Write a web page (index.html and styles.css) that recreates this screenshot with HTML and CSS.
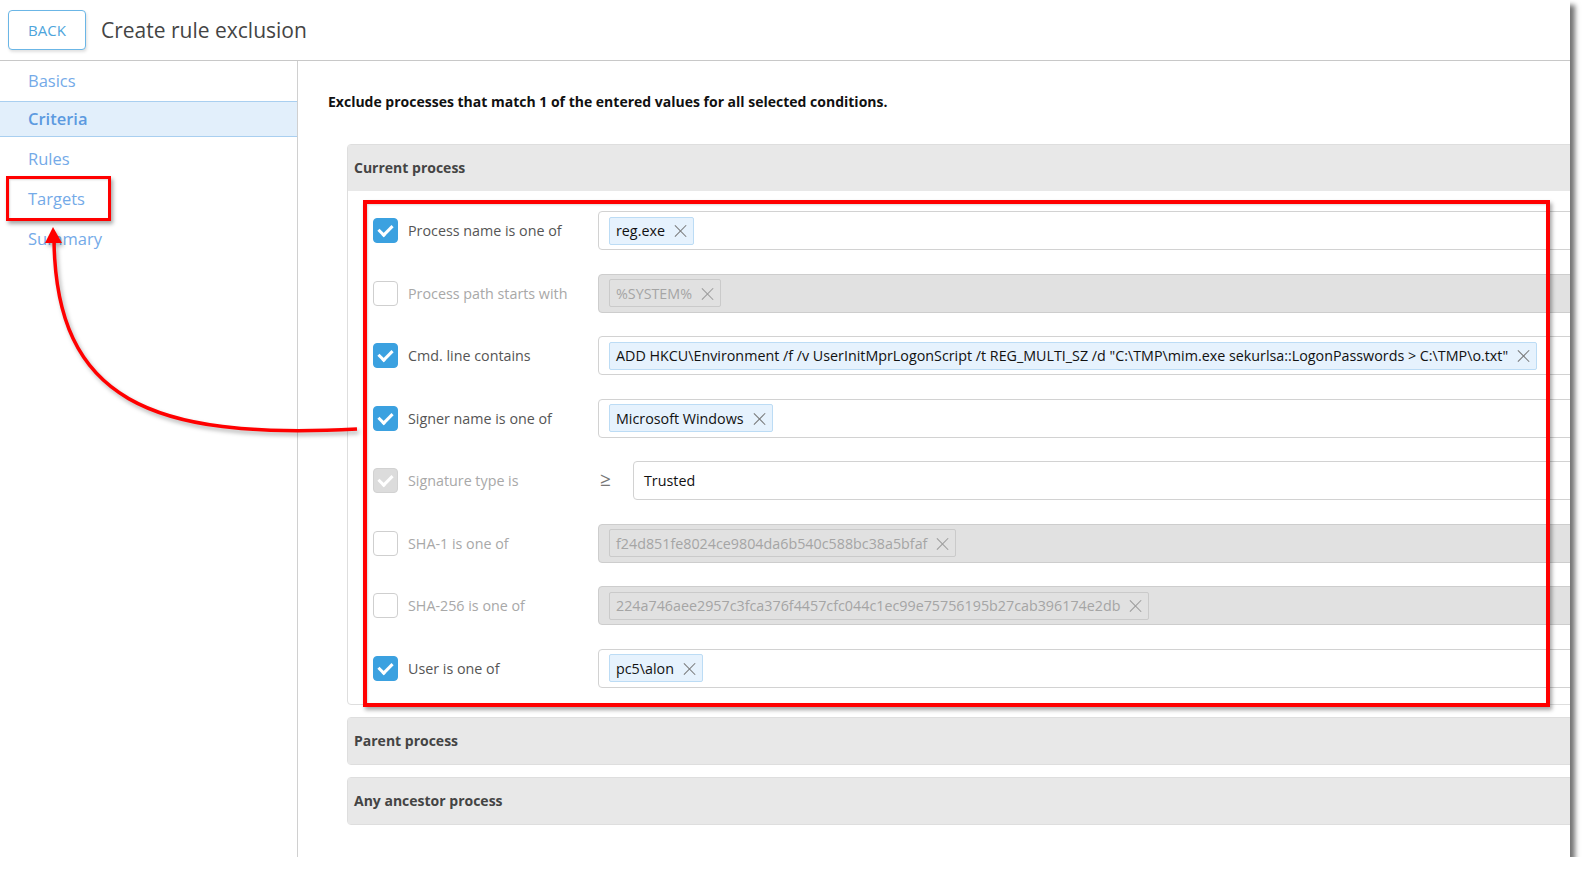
FILE: index.html
```html
<!DOCTYPE html>
<html lang="en">

<head>
    <meta charset="UTF-8">
    <meta name="viewport" content="width=device-width, initial-scale=1.0">
    <title>Create rule exclusion</title>
    <link rel="stylesheet" href="styles.css">
</head>

<body>
    <div class="frame">
        <div class="topbar">
            <button class="back">BACK</button>
            <h1 class="title">Create rule exclusion</h1>
        </div>
        <div class="layout">
            <div class="nav">
                <div class="navItem">Basics</div>
                <div class="navItem active">Criteria</div>
                <div class="navItem">Rules</div>
                <div class="navItem">Targets</div>
                <div class="navItem">Summary</div>
            </div>
            <div class="main">
                <p class="intro">Exclude processes that match 1 of the entered values for all selected conditions.</p>

                <div class="panel">
                    <div class="panelHead">Current process</div>
                    <div class="panelBody">
                        <div class="row">
                            <span class="check on"></span>
                            <span class="label">Process name is one of</span>
                            <div class="field">
                                <span class="tag">reg.exe<i class="x"></i></span>
                            </div>
                        </div>
                        <div class="row off">
                            <span class="check"></span>
                            <span class="label">Process path starts with</span>
                            <div class="field">
                                <span class="tag">%SYSTEM%<i class="x"></i></span>
                            </div>
                        </div>
                        <div class="row">
                            <span class="check on"></span>
                            <span class="label">Cmd. line contains</span>
                            <div class="field">
                                <span class="tag">ADD HKCU\Environment /f /v UserInitMprLogonScript /t REG_MULTI_SZ /d "C:\TMP\mim.exe sekurlsa::LogonPasswords &gt; C:\TMP\o.txt"<i class="x"></i></span>
                            </div>
                        </div>
                        <div class="row">
                            <span class="check on"></span>
                            <span class="label">Signer name is one of</span>
                            <div class="field">
                                <span class="tag">Microsoft Windows<i class="x"></i></span>
                            </div>
                        </div>
                        <div class="row locked">
                            <span class="check on"></span>
                            <span class="label">Signature type is</span>
                            <span class="op">≥</span>
                            <div class="field plain">Trusted</div>
                        </div>
                        <div class="row off">
                            <span class="check"></span>
                            <span class="label">SHA-1 is one of</span>
                            <div class="field">
                                <span class="tag">f24d851fe8024ce9804da6b540c588bc38a5bfaf<i class="x"></i></span>
                            </div>
                        </div>
                        <div class="row off">
                            <span class="check"></span>
                            <span class="label">SHA-256 is one of</span>
                            <div class="field">
                                <span class="tag">224a746aee2957c3fca376f4457cfc044c1ec99e75756195b27cab396174e2db<i class="x"></i></span>
                            </div>
                        </div>
                        <div class="row">
                            <span class="check on"></span>
                            <span class="label">User is one of</span>
                            <div class="field">
                                <span class="tag">pc5\alon<i class="x"></i></span>
                            </div>
                        </div>
                    </div>
                </div>

                <div class="panel closed">
                    <div class="panelHead">Parent process</div>
                </div>
                <div class="panel closed">
                    <div class="panelHead">Any ancestor process</div>
                </div>
            </div>
        </div>

        <!-- callouts drawn over the form -->
        <div class="mark markNav"></div>
        <div class="mark markRows"></div>
        <svg class="arrow" width="400" height="460" viewBox="0 0 400 460">
            <path d="M357 429 C 150 440, 56 400, 54 240" fill="none" stroke="#f00" stroke-width="3.5" />
            <polygon points="53,227 45,243 62,243" fill="#f00" />
        </svg>
    </div>
</body>

</html>
```

FILE: styles.css
```css
body {
    margin: 0;
    background: #fff;
    font-family: "Open Sans", "Noto Sans", sans-serif;
}

.frame {
    position: relative;
    width: 1570px;
    height: 857px;
    overflow: hidden;
    background: #fff;
    box-shadow: 5px 5px 5px rgba(0, 0, 0, 0.55);
}

.topbar {
    display: flex;
    align-items: center;
    height: 60px;
    border-bottom: 1px solid #c8c8c8;
}

.back {
    width: 78px;
    height: 40px;
    margin: 0 15px 0 8px;
    border: 1px solid #6bb6e6;
    border-radius: 4px;
    background: #fff;
    color: #4ea5dc;
    font-family: inherit;
    font-size: 15px;
    box-shadow: 1px 2px 3px rgba(0, 0, 0, 0.12);
}

.title {
    margin: 0;
    font-size: 21px;
    font-weight: normal;
    color: #444;
}

.layout {
    display: flex;
    height: 796px;
}

.nav {
    width: 297px;
    flex: none;
    border-right: 1px solid #d0d0d0;
}

.navItem {
    padding-left: 28px;
    line-height: 40px;
    font-size: 16.5px;
    color: #74aae8;
}

.navItem.active {
    line-height: 34px;
    margin-bottom: 2px;
    background: #e2effb;
    border-top: 1px solid #a9cff0;
    border-bottom: 1px solid #a9cff0;
    color: #5c9ae0;
    font-weight: 600;
}

.main {
    flex: 1;
    padding-left: 30px;
    overflow: hidden;
}

.intro {
    margin: 31px 0 33px;
    font-size: 14px;
    font-weight: 700;
    color: #111;
}

.panel {
    width: 1320px;
    margin-left: 19px;
    border: 1px solid #dedede;
    border-radius: 4px;
    background: #fff;
}

.panel.closed {
    margin-top: 12px;
}

.panelHead {
    height: 46px;
    line-height: 46px;
    padding-left: 6px;
    background: #e8e8e8;
    font-size: 14px;
    font-weight: 700;
    color: #444;
}

.panelBody {
    display: flex;
    flex-direction: column;
    gap: 23.5px;
    padding: 20px 0 16px 25px;
}

.row {
    display: flex;
    align-items: center;
    height: 39px;
}

.check {
    width: 23px;
    height: 23px;
    flex: none;
    border: 1px solid #cfcfcf;
    border-radius: 4px;
    background: #fff;
    position: relative;
}

.check.on {
    background: #3ba1e0;
    border-color: #3ba1e0;
}

.check.on::after {
    content: "";
    position: absolute;
    left: 7px;
    top: 3px;
    width: 6px;
    height: 11px;
    border: solid #fff;
    border-width: 0 3px 3px 0;
    transform: rotate(45deg);
}

.locked .check.on {
    background: #dcdcdc;
    border-color: #d2d2d2;
}

.label {
    width: 190px;
    margin-left: 10px;
    font-size: 14.3px;
    color: #555;
}

.off .label,
.locked .label {
    color: #a8a8a8;
}

.op {
    width: 22px;
    margin-left: 2px;
    margin-top: -3px;
    font-size: 19px;
    color: #777;
}

.field {
    flex: 1;
    display: flex;
    align-items: center;
    height: 37px;
    padding-left: 10px;
    border: 1px solid #d2d2d2;
    border-radius: 4px;
    background: #fff;
}

.field.plain {
    margin-left: 11px;
    font-size: 14.3px;
    color: #111;
}

.off .field {
    background: #e1e1e1;
    border-color: #cdcdcd;
}

.tag {
    display: inline-flex;
    align-items: center;
    height: 26px;
    padding: 0 6px;
    border: 1px solid #bcdcf5;
    border-radius: 2px;
    background: #e6f2fd;
    font-size: 14.3px;
    color: #111;
    white-space: nowrap;
}

.off .tag {
    background: #e1e1e1;
    border-color: #cacaca;
    color: #a5a5a5;
}

.x {
    position: relative;
    width: 13px;
    height: 13px;
    margin-left: 9px;
}

.x::before,
.x::after {
    content: "";
    position: absolute;
    left: 6px;
    top: -1px;
    width: 1.3px;
    height: 16px;
    background: #777;
    transform: rotate(45deg);
}

.x::after {
    transform: rotate(-45deg);
}

.off .x::before,
.off .x::after {
    background: #999;
}

.mark {
    position: absolute;
    border: 4px solid #f00;
    box-shadow: 2px 3px 4px rgba(0, 0, 0, 0.35), inset 1px 1px 2px rgba(0, 0, 0, 0.15);
}

.markNav {
    left: 6px;
    top: 176px;
    width: 99px;
    height: 39px;
    border-width: 3.5px;
}

.markRows {
    left: 363px;
    top: 200px;
    width: 1179px;
    height: 499px;
}

.arrow {
    position: absolute;
    left: 0;
    top: 0;
    filter: drop-shadow(2px 3px 2px rgba(0, 0, 0, 0.3));
}
```
